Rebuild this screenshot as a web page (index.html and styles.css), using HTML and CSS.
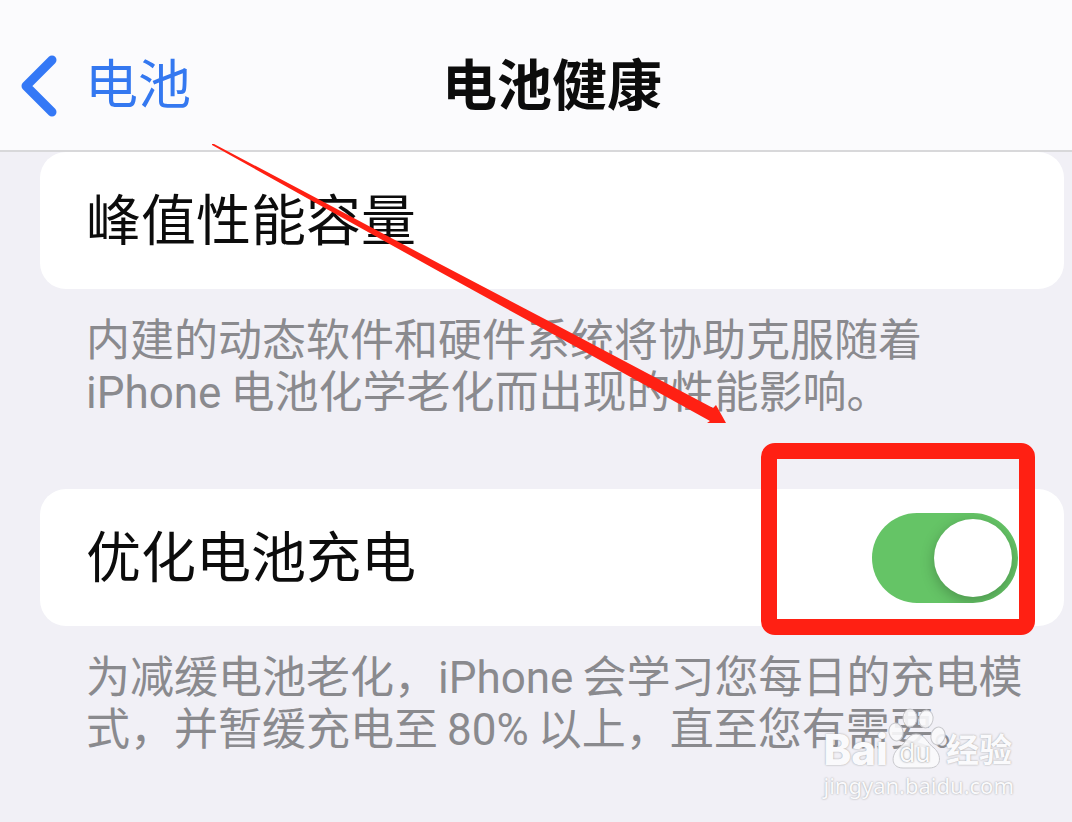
FILE: index.html
```html
<!DOCTYPE html>
<html lang="zh-CN">
  <head>
    <meta charset="UTF-8" />
    <meta name="viewport" content="width=device-width, initial-scale=1.0" />
    <title>电池健康</title>
    <link rel="stylesheet" href="styles.css">
  </head>
  <body>
    <header class="navbar">
      <a class="back" href="#">
        <svg class="back-icon" viewBox="0 0 38 62" aria-hidden="true">
          <path d="M32 5 L6 31 L32 57" />
        </svg>
        电池
      </a>
      <h1 class="title">电池健康</h1>
    </header>

    <main class="content">
      <section class="group">
        <div class="card">
          <span class="label">峰值性能容量</span>
        </div>
        <p class="note">内建的动态软件和硬件系统将协助克服随着<br>iPhone&thinsp;电池化学老化而出现的性能影响。</p>
      </section>

      <section class="group">
        <div class="card">
          <label class="label" for="charging">优化电池充电</label>
          <input type="checkbox" id="charging" class="switch" checked />
          <div class="highlight"></div>
        </div>
        <p class="note">为减缓电池老化，iPhone&thinsp;会学习您每日的充电模<br>式，并暂缓充电至&thinsp;80%&thinsp;以上，直至您有需要。</p>
      </section>
    </main>

    <svg class="arrow" viewBox="0 0 516 282" aria-hidden="true">
      <path d="M0 0 L2 0 L93 48 L228 120 L348 183 L501 264 L504 261 L514 279 L495 279 L498 277 L348 194 L228 128 L93 53 L0 1 Z" />
    </svg>

    <div class="watermark">
      <div class="brand">
        <span class="latin">Bai</span>
        <span class="paw">
          <svg viewBox="0 0 58 62" aria-hidden="true">
            <ellipse cx="8" cy="24" rx="7" ry="9" transform="rotate(-12 8 24)" />
            <ellipse cx="22" cy="10" rx="7" ry="9" />
            <ellipse cx="38" cy="11" rx="7" ry="9" transform="rotate(10 38 11)" />
            <ellipse cx="50" cy="28" rx="7" ry="9" transform="rotate(12 50 28)" />
            <path d="M28 26 C20 26 18 35 11 40 C3 46 2 60 15 60 H41 C54 60 54 47 46 40 C39 35 37 26 28 26 Z" />
          </svg>
          <span class="du">du</span>
        </span>
        <span class="cn">经验</span>
      </div>
      <div class="site">jingyan.baidu.com</div>
    </div>
  </body>
</html>
```

FILE: styles.css
```css
* {
  box-sizing: border-box;
}

body {
  margin: 0;
  position: relative;
  min-height: 100vh;
  background-color: #f1f0f6;
  color: #0c0c0c;
  font-family: Roboto, "Noto Sans CJK SC", sans-serif;
}

/* Top bar */
.navbar {
  display: grid;
  grid-template-columns: 1fr auto 1fr;
  align-items: center;
  height: 152px;
  padding: 22px 8px 0 40px;
  background-color: #fbfbfd;
  border-bottom: 2px solid #d8d8da;
}

.back {
  display: flex;
  align-items: center;
  gap: 27px;
  margin-left: -20px;
  color: #3478f0;
  font-size: 53px;
  line-height: 64px;
  text-decoration: none;
}

.back-icon {
  width: 38px;
  height: 62px;
  fill: none;
  stroke: #3478f6;
  stroke-width: 9;
  stroke-linecap: round;
  stroke-linejoin: round;
}

.title {
  margin: 0;
  font-size: 55px;
  line-height: 64px;
  font-weight: 700;
}

/* Settings groups */
.content {
  padding: 0 8px 0 40px;
}

.group {
  margin-bottom: 70px;
}

.card {
  position: relative;
  display: flex;
  align-items: center;
  justify-content: space-between;
  height: 137px;
  padding: 0 46px;
  background-color: #fff;
  border-radius: 26px;
}

.label {
  font-size: 55px;
  line-height: 72px;
}

.note {
  margin: 0;
  padding: 26px 0 0 46px;
  color: #8a8a8e;
  font-size: 44px;
  line-height: 52px;
  white-space: nowrap;
}

/* Switch */
.switch {
  appearance: none;
  width: 146px;
  height: 90px;
  margin: 0;
  padding: 6px;
  border-radius: 45px;
  background-color: #65c466;
  overflow: hidden;
}

.switch::before {
  content: "";
  display: block;
  width: 78px;
  height: 78px;
  border-radius: 50%;
  background-color: #fff;
  box-shadow: 0 4px 14px rgba(0, 0, 0, 0.25);
}

.switch:checked::before {
  margin-left: auto;
}

/* Red marks over the page */
.highlight {
  position: absolute;
  top: -46px;
  right: 29px;
  width: 274px;
  height: 192px;
  border: 16px solid #ff2013;
  border-radius: 14px;
  pointer-events: none;
}

.arrow {
  position: absolute;
  top: 144px;
  left: 212px;
  width: 516px;
  height: 282px;
  fill: #ff2013;
  pointer-events: none;
}

/* Watermark */
.watermark {
  position: absolute;
  top: 708px;
  right: 58px;
  color: #fafafc;
  text-shadow: 0 0 2px #999;
  pointer-events: none;
}

.brand {
  display: flex;
  align-items: flex-end;
  height: 62px;
}

.latin {
  font-family: Inter, sans-serif;
  font-size: 42px;
  line-height: 40px;
  font-weight: 800;
}

.paw {
  position: relative;
  width: 58px;
  height: 62px;
}

.paw svg {
  display: block;
  fill: #fafafc;
  fill-opacity: 0.9;
  stroke: #c8c8cc;
}

.du {
  position: absolute;
  left: 0;
  right: 4px;
  bottom: 2px;
  font-family: Inter, sans-serif;
  font-size: 26px;
  line-height: 30px;
  text-align: center;
  text-shadow: 0 0 2px #777;
}

.cn {
  font-size: 33px;
  line-height: 38px;
  font-weight: 700;
}

.site {
  font-family: "Noto Sans", sans-serif;
  font-size: 22px;
  line-height: 30px;
}
```
